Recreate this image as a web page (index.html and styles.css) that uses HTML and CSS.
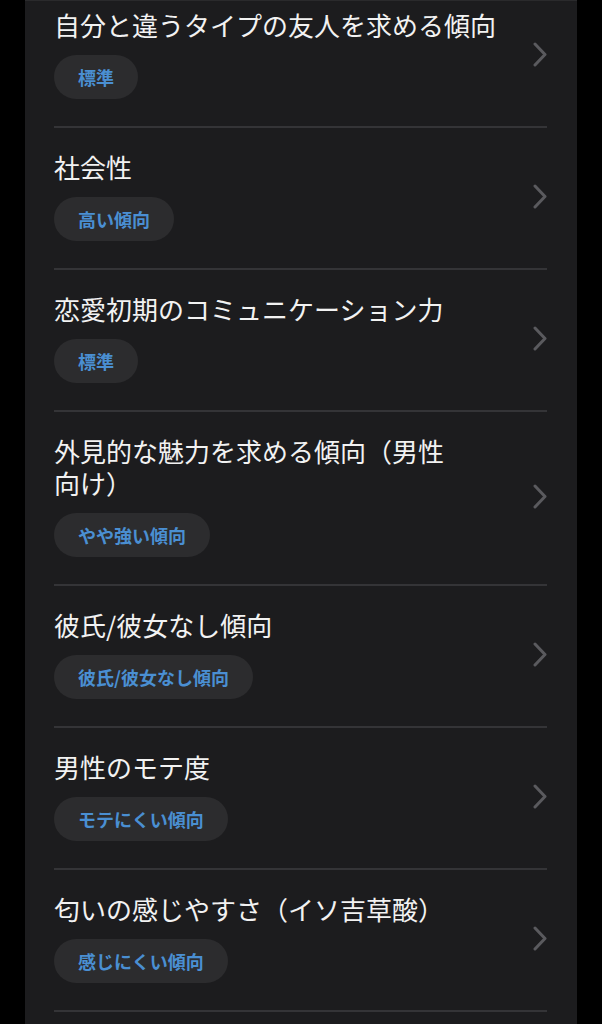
FILE: index.html
```html
<!DOCTYPE html>
<html lang="ja">
<head>
<meta charset="utf-8">
<link rel="stylesheet" href="styles.css">
</head>
<body>
<div class="screen">
  <ul class="list">
    <li class="row">
      <div class="info">
        <div class="title">自分と違うタイプの友人を求める傾向</div>
        <span class="badge">標準</span>
      </div>
      <svg class="chev" viewBox="0 0 14 25"><polyline points="2,2 12,12.5 2,23"/></svg>
    </li>
    <li class="row">
      <div class="info">
        <div class="title">社会性</div>
        <span class="badge">高い傾向</span>
      </div>
      <svg class="chev" viewBox="0 0 14 25"><polyline points="2,2 12,12.5 2,23"/></svg>
    </li>
    <li class="row">
      <div class="info">
        <div class="title">恋愛初期のコミュニケーション力</div>
        <span class="badge">標準</span>
      </div>
      <svg class="chev" viewBox="0 0 14 25"><polyline points="2,2 12,12.5 2,23"/></svg>
    </li>
    <li class="row">
      <div class="info">
        <div class="title">外見的な魅力を求める傾向（男性<span class="nw">向け）</span></div>
        <span class="badge">やや強い傾向</span>
      </div>
      <svg class="chev" viewBox="0 0 14 25"><polyline points="2,2 12,12.5 2,23"/></svg>
    </li>
    <li class="row">
      <div class="info">
        <div class="title">彼氏/彼女なし傾向</div>
        <span class="badge">彼氏/彼女なし傾向</span>
      </div>
      <svg class="chev" viewBox="0 0 14 25"><polyline points="2,2 12,12.5 2,23"/></svg>
    </li>
    <li class="row">
      <div class="info">
        <div class="title">男性のモテ度</div>
        <span class="badge">モテにくい傾向</span>
      </div>
      <svg class="chev" viewBox="0 0 14 25"><polyline points="2,2 12,12.5 2,23"/></svg>
    </li>
    <li class="row">
      <div class="info">
        <div class="title">匂いの感じやすさ（イソ吉草酸）</div>
        <span class="badge">感じにくい傾向</span>
      </div>
      <svg class="chev" viewBox="0 0 14 25"><polyline points="2,2 12,12.5 2,23"/></svg>
    </li>
  </ul>
</div>
</body>
</html>
```
FILE: styles.css
```css
html, body {
  margin: 0;
  padding: 0;
  background: #000;
  height: 100%;
  overflow: hidden;
}
.screen {
  width: 552px;
  margin: 0 auto;
  height: 1024px;
  background: #1c1c1e;
  border-top: 1px solid #2a2a2c;
  box-sizing: border-box;
  overflow: hidden;
  font-family: "Noto Sans CJK JP", "Noto Sans", sans-serif;
}
.list {
  list-style: none;
  margin: -15px 30px 0 29px;
  padding: 0;
}
.row {
  display: flex;
  align-items: center;
  padding: 23px 0 27px;
  border-bottom: 2px solid #343437;
}
.info {
  flex: 1;
  display: flex;
  flex-direction: column;
  align-items: flex-start;
  gap: 14px;
  padding-right: 20px;
}
.title {
  color: #f2f2f2;
  font-size: 26px;
  line-height: 32px;
  font-weight: 400;
}
.nw {
  white-space: nowrap;
}
.badge {
  display: inline-flex;
  align-items: center;
  height: 44px;
  padding: 0 24px;
  border-radius: 22px;
  background: #2c2c2e;
  color: #4a8fd2;
  font-size: 18px;
  font-weight: 700;
}
.chev {
  width: 14px;
  height: 25px;
  flex: none;
}
.chev polyline {
  fill: none;
  stroke: #5a5a5e;
  stroke-width: 3;
  stroke-linecap: round;
  stroke-linejoin: round;
}
```
